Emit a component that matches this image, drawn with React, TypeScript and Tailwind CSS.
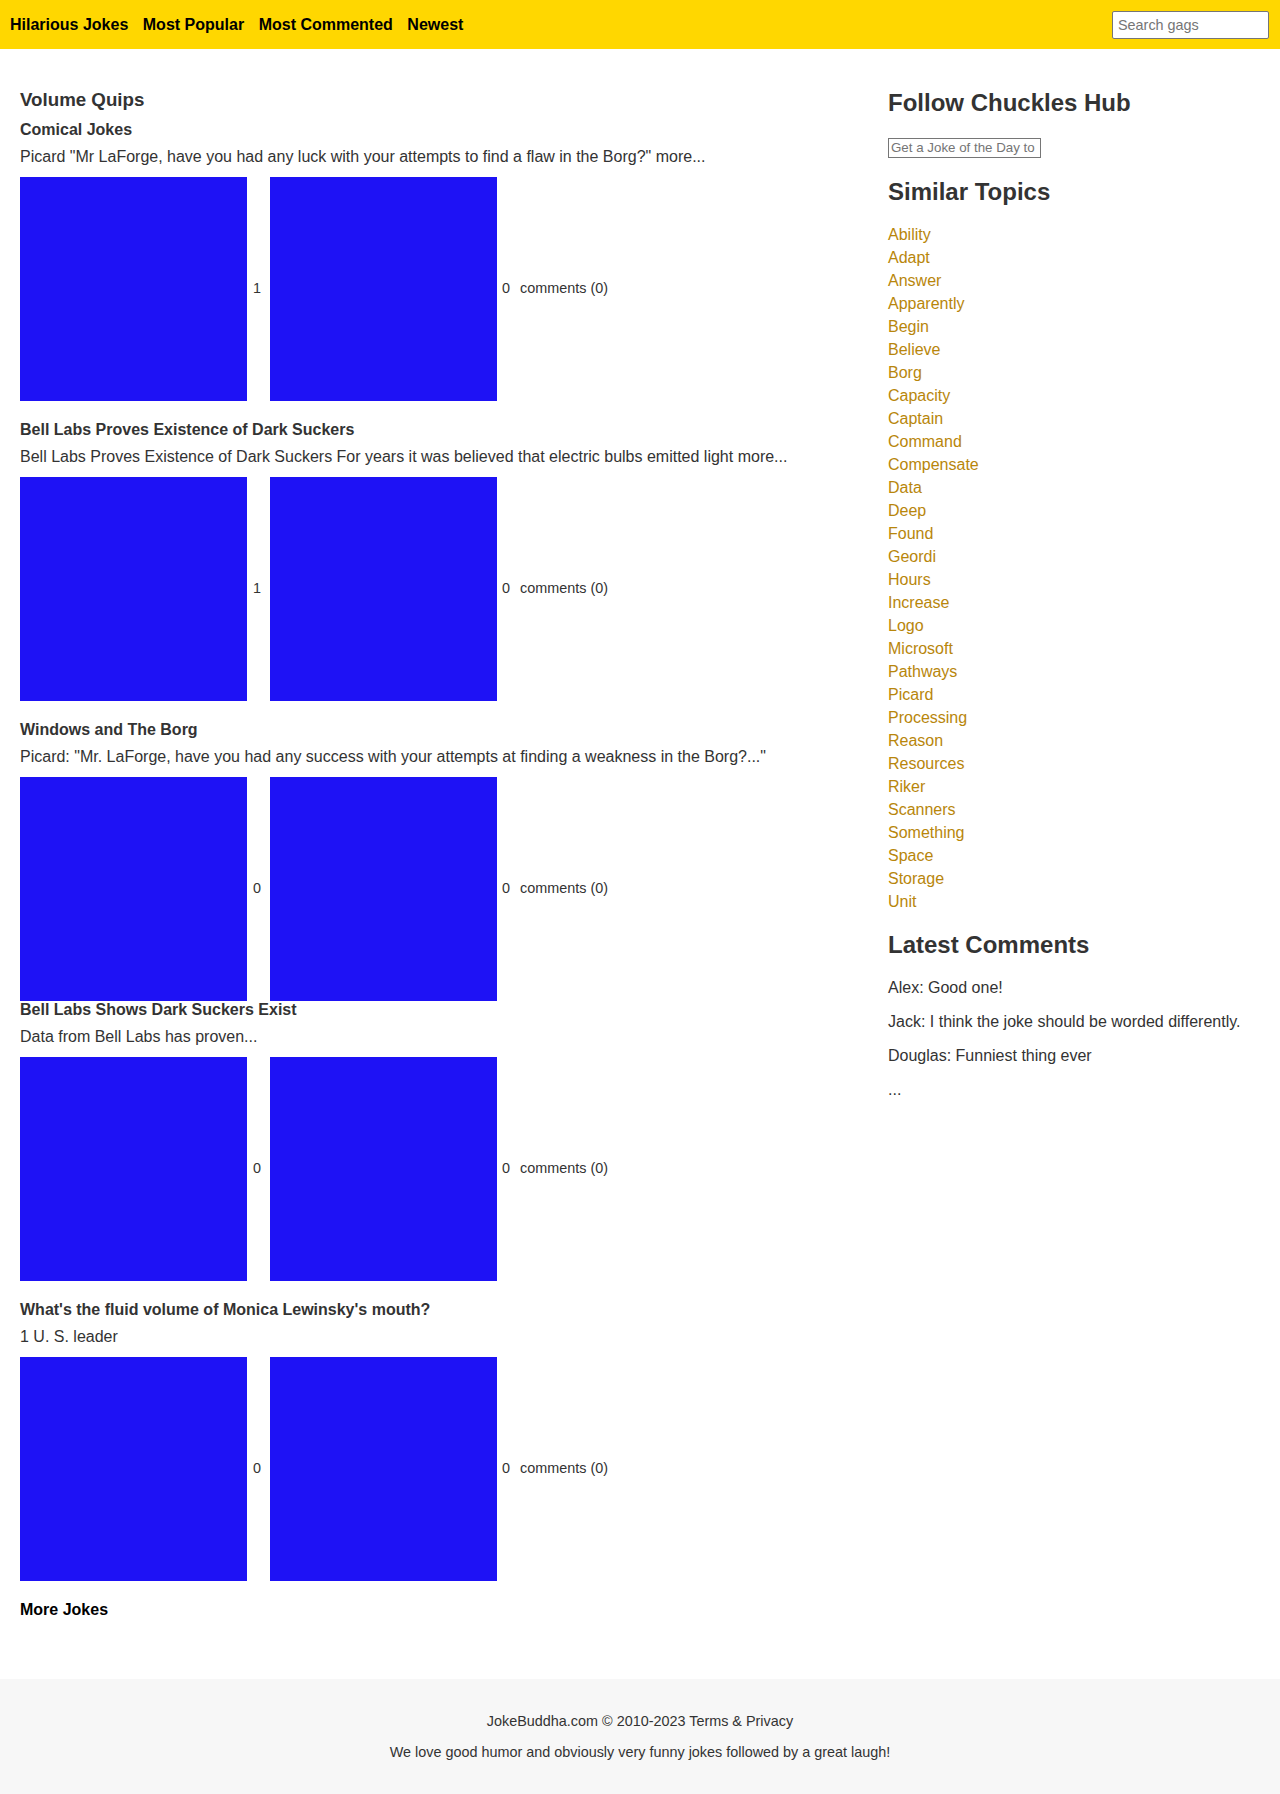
const jokes = [
  {
    title: "Comical Jokes",
    text: 'Picard "Mr LaForge, have you had any luck with your attempts to find a flaw in the Borg?" more...',
    up: 1,
    down: 0,
  },
  {
    title: "Bell Labs Proves Existence of Dark Suckers",
    text: "Bell Labs Proves Existence of Dark Suckers For years it was believed that electric bulbs emitted light more...",
    up: 1,
    down: 0,
  },
  {
    title: "Windows and The Borg",
    text: 'Picard: "Mr. LaForge, have you had any success with your attempts at finding a weakness in the Borg?..."',
    up: 0,
    down: 0,
  },
  {
    title: "Bell Labs Shows Dark Suckers Exist",
    text: "Data from Bell Labs has proven...",
    up: 0,
    down: 0,
    tight: true,
  },
  {
    title: "What's the fluid volume of Monica Lewinsky's mouth?",
    text: "1 U. S. leader",
    up: 0,
    down: 0,
  },
];

const topics = [
  "Ability", "Adapt", "Answer", "Apparently", "Begin", "Believe", "Borg", "Capacity",
  "Captain", "Command", "Compensate", "Data", "Deep", "Found", "Geordi", "Hours",
  "Increase", "Logo", "Microsoft", "Pathways", "Picard", "Processing", "Reason",
  "Resources", "Riker", "Scanners", "Something", "Space", "Storage", "Unit",
];

const comments = [
  "Alex: Good one!",
  "Jack: I think the joke should be worded differently.",
  "Douglas: Funniest thing ever",
  "...",
];

function JokeItem({ joke, first }: { joke: (typeof jokes)[number]; first: boolean }) {
  const top = first ? "mt-[10px]" : joke.tight ? "mt-0" : "mt-[20px]";
  return (
    <div className={top}>
      <h4 className="text-base leading-[18px] font-bold text-[#333]">{joke.title}</h4>
      <p className="mt-[9px] text-base leading-[18px] text-[#333]">{joke.text}</p>
      <div className="mt-[11px] flex items-center text-[14.4px] text-[#333]">
        <div className="h-[224px] w-[227px] bg-[#1e12f5]" />
        <span className="ml-[6px] mr-[9px]">{joke.up}</span>
        <div className="h-[224px] w-[227px] bg-[#1e12f5]" />
        <span className="ml-[5px] mr-[10px]">{joke.down}</span>
        <a href="#">comments (0)</a>
      </div>
    </div>
  );
}

export default function App() {
  return (
    <div className="min-h-screen bg-white font-['Liberation_Sans',Arial,sans-serif] text-[#333]">
      <header className="flex h-[49px] items-center justify-between bg-[#ffd700] pl-[10px] pr-[11px]">
        <nav className="flex gap-[14.5px] text-base font-bold text-black">
          <a href="#">Hilarious Jokes</a>
          <a href="#">Most Popular</a>
          <a href="#">Most Commented</a>
          <a href="#">Newest</a>
        </nav>
        <input
          type="text"
          placeholder="Search gags"
          className="h-[28px] w-[157px] rounded-[2px] border border-[#767676] bg-white px-[5px] text-[14.4px] text-black placeholder:text-[#757575] outline-none"
        />
      </header>

      <div className="flex px-[20px] pt-[20px] pb-[20px]">
        <main className="w-[70%]">
          <h3 className="mt-[20px] text-[18.72px] leading-[21.5px] font-bold text-[#333]">Volume Quips</h3>
          {jokes.map((j, i) => (
            <JokeItem key={j.title} joke={j} first={i === 0} />
          ))}
          <h4 className="mt-[20px] mb-[40px] text-base leading-[18px] font-bold text-black">More Jokes</h4>
        </main>

        <aside className="w-[30%]">
          <h2 className="mt-[20px] text-[24px] leading-[28px] font-bold text-[#333]">Follow Chuckles Hub</h2>
          <div className="mt-[18px]">
            <input
              type="text"
              placeholder="Get a Joke of the Day to your inbox"
              className="h-[20px] w-[153px] border border-[#767676] bg-white px-[2px] text-[13.33px] placeholder:text-[#757575] outline-none"
            />
          </div>
          <h2 className="mt-[19px] text-[24px] leading-[28px] font-bold text-[#333]">Similar Topics</h2>
          <ul className="mt-[17px]">
            {topics.map((t) => (
              <li key={t} className="text-base leading-[23px]">
                <a href="#" className="text-[#b8860b]">{t}</a>
              </li>
            ))}
          </ul>
          <h2 className="mt-[18px] text-[24px] leading-[28px] font-bold text-[#333]">Latest Comments</h2>
          <div className="mt-[20px] flex flex-col gap-[16px]">
            {comments.map((c) => (
              <p key={c} className="text-base leading-[18px] text-[#333]">{c}</p>
            ))}
          </div>
        </aside>
      </div>

      <footer className="bg-[#f7f7f7] px-[20px] py-[20px] text-center text-[14.4px] text-[#333]">
        <p className="my-[14px] leading-[17px]">
          JokeBuddha.com © 2010-2023 <a href="#">Terms &amp; Privacy</a>
        </p>
        <p className="my-[14px] leading-[17px]">
          We love good humor and obviously very funny jokes followed by a great laugh!
        </p>
      </footer>
    </div>
  );
}
